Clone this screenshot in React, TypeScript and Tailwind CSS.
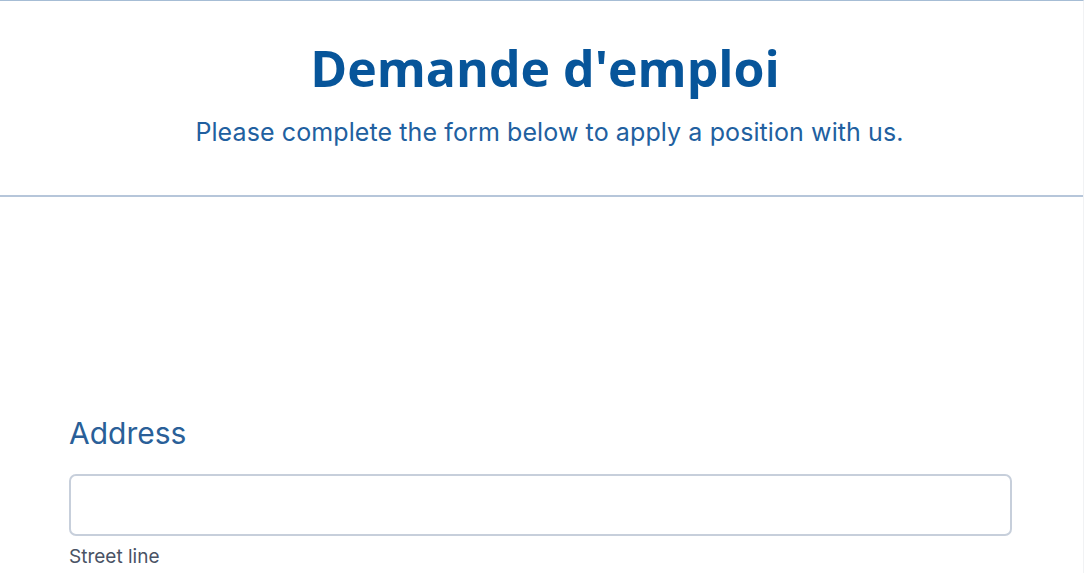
export default function App() {
  return (
    <div className="min-h-[573px] w-full border-r border-t border-r-[#f1f2f4] border-t-[#a6bdd5] bg-white font-['Inter',sans-serif]">
      <header className="flex flex-col items-center border-b-2 border-[#b6c6da] pb-[48px] pl-[7px] pt-[33px]">
        <h1 className="font-['Open_Sans',sans-serif] text-[50px] font-bold leading-[68px] text-[#07559a]">
          Demande d'emploi
        </h1>
        <p className="ml-[9px] mt-[15px] text-[25px] leading-[30px] tracking-[0.1px] text-[#2160a0]">
          Please complete the form below to apply a position with us.
        </p>
      </header>

      <section className="pl-[69px] pt-[218px]">
        <label htmlFor="street" className="block text-[30px] leading-[36px] text-[#2a5f98]">
          Address
        </label>
        <div className="mt-[23px] w-[943px]">
          <input
            id="street"
            type="text"
            className="block h-[62px] w-full rounded-[7px] border-2 border-[#c7cfdb] bg-white px-3 outline-none"
          />
          <p className="mt-[9px] text-[19px] leading-[24px] text-[#4a5365]">Street line</p>
        </div>
      </section>
    </div>
  );
}
